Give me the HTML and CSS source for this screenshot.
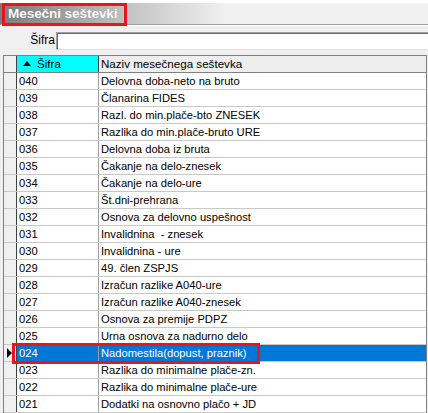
FILE: index.html
```html
<!DOCTYPE html>
<html>
<head>
<meta charset="utf-8">
<link rel="stylesheet" href="styles.css">
</head>
<body>
<div class="page">
  <div class="titlebar"><span class="title">Mesečni seštevki</span></div>
  <div class="mark mark-title"></div>
  <div class="filter">
    <label class="flabel">Šifra</label>
    <div class="finput"></div>
  </div>
  <div class="grid">
    <div class="row head">
      <div class="ind"></div>
      <div class="c1 sorted"><span class="arrow"></span>Šifra</div>
      <div class="c2">Naziv mesečnega seštevka</div>
    </div>
    <div class="row"><div class="ind"></div><div class="c1">040</div><div class="c2">Delovna doba-neto na bruto</div></div>
    <div class="row"><div class="ind"></div><div class="c1">039</div><div class="c2">Članarina FIDES</div></div>
    <div class="row"><div class="ind"></div><div class="c1">038</div><div class="c2">Razl. do min.plače-bto ZNESEK</div></div>
    <div class="row"><div class="ind"></div><div class="c1">037</div><div class="c2">Razlika do min.plače-bruto URE</div></div>
    <div class="row"><div class="ind"></div><div class="c1">036</div><div class="c2">Delovna doba iz bruta</div></div>
    <div class="row"><div class="ind"></div><div class="c1">035</div><div class="c2">Čakanje na delo-znesek</div></div>
    <div class="row"><div class="ind"></div><div class="c1">034</div><div class="c2">Čakanje na delo-ure</div></div>
    <div class="row"><div class="ind"></div><div class="c1">033</div><div class="c2">Št.dni-prehrana</div></div>
    <div class="row"><div class="ind"></div><div class="c1">032</div><div class="c2">Osnova za delovno uspešnost</div></div>
    <div class="row"><div class="ind"></div><div class="c1">031</div><div class="c2">Invalidnina&nbsp; - znesek</div></div>
    <div class="row"><div class="ind"></div><div class="c1">030</div><div class="c2">Invalidnina - ure</div></div>
    <div class="row"><div class="ind"></div><div class="c1">029</div><div class="c2">49. člen ZSPJS</div></div>
    <div class="row"><div class="ind"></div><div class="c1">028</div><div class="c2">Izračun razlike A040-ure</div></div>
    <div class="row"><div class="ind"></div><div class="c1">027</div><div class="c2">Izračun razlike A040-znesek</div></div>
    <div class="row"><div class="ind"></div><div class="c1">026</div><div class="c2">Osnova za premije PDPZ</div></div>
    <div class="row"><div class="ind"></div><div class="c1">025</div><div class="c2">Urna osnova za nadurno delo</div></div>
    <div class="row selected"><div class="ind"><span class="ptr"></span></div><div class="c1">024</div><div class="c2">Nadomestila(dopust, praznik)</div><div class="mark mark-row"></div></div>
    <div class="row"><div class="ind"></div><div class="c1">023</div><div class="c2">Razlika do minimalne plače-zn.</div></div>
    <div class="row"><div class="ind"></div><div class="c1">022</div><div class="c2">Razlika do minimalne plače-ure</div></div>
    <div class="row"><div class="ind"></div><div class="c1">021</div><div class="c2">Dodatki na osnovno plačo + JD</div></div>
  </div>
</div>
</body>
</html>
```
FILE: styles.css
```css
html, body {
  margin: 0;
  padding: 0;
  background: #ffffff;
  overflow: hidden;
}
.page {
  position: relative;
  width: 428px;
  height: 413px;
  overflow: hidden;
  background: #f0f0f0;
  border-top: 3px solid #ffffff;
  box-sizing: border-box;
  font-family: "Liberation Sans", Arial, sans-serif;
  font-size: 11.2px;
  color: #000;
}
.titlebar {
  height: 21px;
  background: linear-gradient(to right, #7c7c7c 0px, #c4c4c4 130px, #f0f0f0 225px, #f0f0f0 100%);
  border-bottom: 1px solid #a0a0a0;
  box-shadow: 0 1px 0 #ffffff;
  display: flex;
  align-items: center;
  padding-left: 8px;
}
.title {
  font-weight: bold;
  font-size: 13.6px;
  color: #ffffff;
  letter-spacing: -0.1px;
  text-shadow: 0 0 1px rgba(0,0,0,0.25);
}
.mark {
  position: absolute;
  border: 2px solid #e8141e;
  box-sizing: border-box;
  pointer-events: none;
}
.mark-title {
  left: 2px;
  top: 0px;
  width: 125px;
  height: 23px;
  border-width: 3px;
}
.filter {
  height: 30px;
  display: flex;
  align-items: center;
}
.flabel {
  width: 56px;
  text-align: right;
  padding-right: 1px;
  box-sizing: border-box;
  font-size: 12px;
  margin-top: -1px;
}
.finput {
  flex: 1;
  height: 18px;
  margin-right: -10px;
  background: #ffffff;
  border-top: 1px solid #a0a0a0;
  border-left: 1px solid #a0a0a0;
  border-bottom: 1px solid #e3e3e3;
  box-shadow: inset 1px 1px 0 #696969;
  box-sizing: border-box;
  margin-top: 1px;
}
.grid {
  margin-left: 3px;
  width: 424px;
  border-top: 1px solid #808080;
  border-left: 1px solid #808080;
  border-right: 1px solid #808080;
  box-sizing: border-box;
  background: #ffffff;
}
.row {
  position: relative;
  display: flex;
  height: 17px;
  line-height: 16px;
  border-bottom: 1px solid #c8c8c8;
  box-sizing: border-box;
}
.ind {
  width: 13px;
  flex: none;
  background: #f0f0f0;
  border-right: 1px solid #404040;
  box-sizing: border-box;
  position: relative;
}
.c1 {
  width: 82px;
  flex: none;
  padding-left: 2px;
  border-right: 1px solid #a0a0a0;
  box-sizing: border-box;
  white-space: nowrap;
}
.c2 {
  flex: 1;
  padding-left: 2px;
  white-space: nowrap;
}
.head {
  background: #f0f0f0;
  border-bottom: 1px solid #808080;
  font-size: 11.6px;
}
.head .c1 {
  border-right: 1px solid #404040;
}
.head .c2 {
  background: #eeeeee;
  padding-left: 2px;
}
.sorted {
  background: #00ffff;
  padding-left: 6px !important;
  display: flex;
  align-items: center;
}
.arrow {
  width: 0;
  height: 0;
  border-left: 4px solid transparent;
  border-right: 4px solid transparent;
  border-bottom: 5px solid #000000;
  margin-right: 6px;
  margin-top: -1px;
}
.selected .c1,
.selected .c2 {
  background: #0078d7;
  color: #ffffff;
}
.ptr {
  position: absolute;
  left: 3px;
  top: 3px;
  width: 0;
  height: 0;
  border-top: 5px solid transparent;
  border-bottom: 5px solid transparent;
  border-left: 5px solid #000000;
}
.mark-row {
  left: 8px;
  top: -2px;
  width: 248px;
  height: 21px;
  border-width: 3px;
  z-index: 2;
}
```
